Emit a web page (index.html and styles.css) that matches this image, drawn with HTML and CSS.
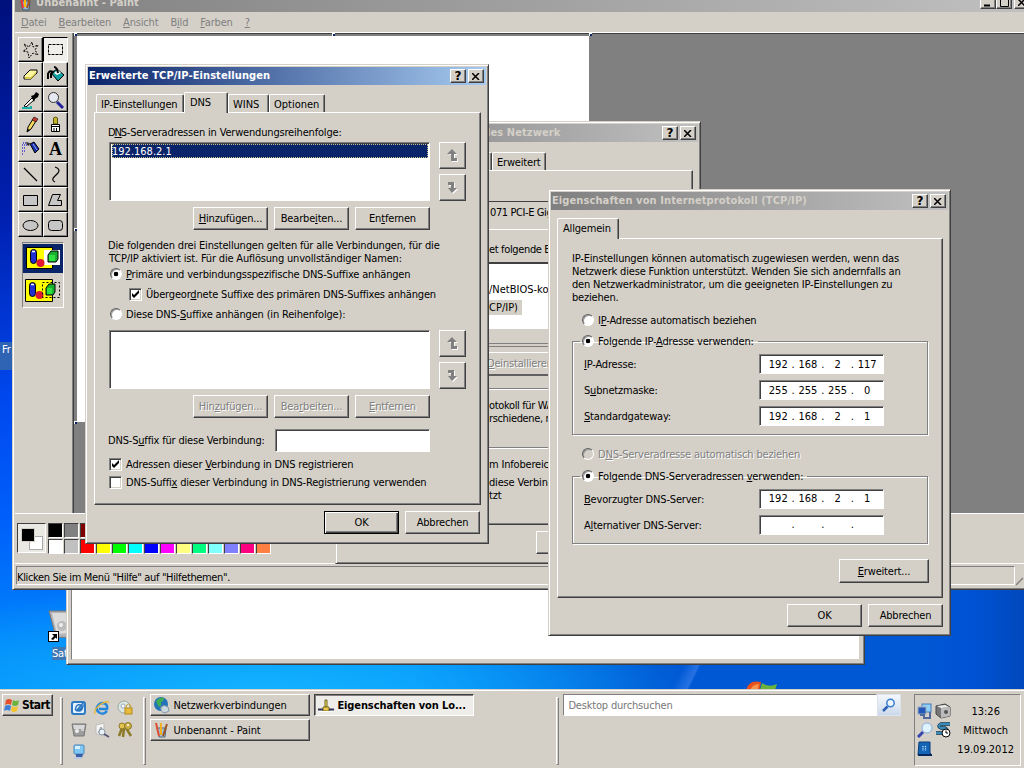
FILE: index.html
```html
<!DOCTYPE html>
<html lang="de">
<head>
<meta charset="utf-8">
<title>Desktop</title>
<link rel="stylesheet" href="styles.css">
</head>
<body>
<main class="desktop">
  <div class="desk-label desk-label-left">Fr</div>
  <div class="desk-icon">
    <svg width="36" height="32" viewBox="0 0 36 32"><path d="M1 1h30l-3 27-20-1z" fill="#b4b4b4" stroke="#777"/><path d="M4 3h20v20l-15 1z" fill="#dcdcdc"/><circle cx="14" cy="16" r="5" fill="#bbb"/><circle cx="13" cy="15" r="2" fill="#eee"/><rect x=".5" y="21.500" width="10" height="10" fill="#fff" stroke="#000"/><path d="M4 24h5v5l-1.500-1.500L5 30l-2-1 3-3z" fill="#000"/></svg>
  </div>
  <div class="desk-label desk-label-sat">Sat</div>
  <svg class="desk-logo" width="34" height="14" viewBox="0 0 34 14"><path d="M1 12Q3 0 16 3L14 14H0z" fill="#e8501c"/><path d="M5 12q2-7 9-7l-2 8z" fill="#f8964c"/><path d="M17 4q7 5 15 1l-3 9H14z" fill="#6db33b"/></svg>

  <section class="window explorer"><div class="explorer-body"></div></section>

  <section class="window paint">
    <header class="titlebar inactive">
      <svg width="16" height="16" viewBox="0 0 16 16"><path d="M3 6h9l-1 9H5z" fill="#8fb9d3" stroke="#456"/><path d="M5 13L3 2" stroke="#e33" stroke-width="2"/><path d="M7 12V2" stroke="#fb0" stroke-width="2"/><path d="M9 13l3-10" stroke="#a52" stroke-width="2"/></svg>
      <h1>Unbenannt - Paint</h1>
      <div class="caption"><b class="cap"><svg width="9" height="9"><path d="M0 7.500h6" stroke="#000" stroke-width="2"/></svg></b><b class="cap"><svg width="9" height="9"><path d="M.5 1.500h8v7h-8z" fill="none" stroke="#000"/></svg></b><b class="cap gap"><svg width="8" height="7"><path d="M0 0l7 7M7 0L0 7" stroke="#000" stroke-width="1.500"/></svg></b></div>
    </header>
    <nav class="menu"><span><u>D</u>atei</span><span><u>B</u>earbeiten</span><span><u>A</u>nsicht</span><span>B<u>i</u>ld</span><span><u>F</u>arben</span><span><u>?</u></span></nav>
    <div class="paint-body">
      <aside class="toolbox">
        <div class="tools">
          <i><svg viewBox="0 0 20 20"><path d="M3 4l5 3 3-5 1 5 5-2-3 5 3 5-5-2-4 5-1-6-5-1 4-2z" fill="none" stroke="#000" stroke-dasharray="2 1.200"/></svg></i>
          <i class="on"><svg viewBox="0 0 20 20"><path d="M2.500 4.500h14v10h-14z" fill="none" stroke="#000" stroke-dasharray="3 1"/></svg></i>
          <i><svg viewBox="0 0 20 20"><path d="M3 11l6-6h7v3l-6 6H3z" fill="#fff7a0" stroke="#000"/><path d="M4 12h6l5-5v2l-5 5H4z" fill="#d6c94e"/></svg></i>
          <i><svg viewBox="0 0 20 20"><path d="M5 8l6-4 7 6-6 6z" fill="#12a0a0" stroke="#000"/><path d="M8 8l4-3 3 3-4 2z" fill="#fff"/><path d="M8 2q3 0 4 6M2 14V9q1-4 5-2l-2 2v4" fill="none" stroke="#000" stroke-width="2"/></svg></i>
          <i><svg viewBox="0 0 20 20"><path d="M3 16l8-8 2 2-8 7z" fill="#fff" stroke="#000"/><path d="M10 6l3-1 2-3 3 2-1 3-3 2-1 3z" fill="#000"/><path d="M1 18h9v-2" stroke="#1ab0a8" stroke-width="2" fill="none"/></svg></i>
          <i><svg viewBox="0 0 20 20"><path d="M11 12l6 6" stroke="#22229c" stroke-width="3"/><circle cx="7.500" cy="7.500" r="5" fill="#e6e9f2" stroke="#333"/></svg></i>
          <i><svg viewBox="0 0 20 20"><path d="M6 17l1-5 5-8 3 2-5 8z" fill="#f5d95c" stroke="#000"/><path d="M11 5l2-3 4 2-2 3z" fill="#c43a30" stroke="#000" stroke-width=".6"/><path d="M6 17l1-3 2 1z"/></svg></i>
          <i><svg viewBox="0 0 20 20"><path d="M9.500 2l2 1v6h-4V3z" fill="#c2b62a" stroke="#5b5510"/><path d="M5.500 9.500h8v7h-8z" fill="#fff" stroke="#000"/><path d="M6 11.500h7M8 13v4M10.500 13v4" stroke="#000"/></svg></i>
          <i><svg viewBox="0 0 20 20"><path d="M9 4l4-2 5 7-4 4z" fill="#1b2fa8" stroke="#000"/><path d="M12 4l4 6" stroke="#8fa8ff"/><path d="M5 2l4 1-1 3-2-1z" fill="#333"/><path d="M2 3h4M1 5h6M1 8h4M1 11h3M1 14h2" stroke="#3b3bd0" stroke-dasharray="1 1" stroke-width="1.500"/></svg></i>
          <i class="letter">A</i>
          <i><svg viewBox="0 0 20 20"><path d="M3 3l13 13" stroke="#000" stroke-width="1.200"/></svg></i>
          <i><svg viewBox="0 0 20 20"><path d="M9 2q6 2 3 6l-4 4q-3 3 1 5" fill="none" stroke="#000" stroke-width="1.200"/></svg></i>
          <i><svg viewBox="0 0 20 20"><path d="M2.500 5.500h14v10h-14z" fill="#c6c6c6" stroke="#000"/></svg></i>
          <i><svg viewBox="0 0 20 20"><path d="M6.500 4.500h8l-3 6h4v5h-13z" fill="#c6c6c6" stroke="#000"/></svg></i>
          <i><svg viewBox="0 0 20 20"><ellipse cx="9.500" cy="10.500" rx="7.500" ry="5" fill="#c6c6c6" stroke="#000"/></svg></i>
          <i><svg viewBox="0 0 20 20"><rect x="2.500" y="5.500" width="14" height="10" rx="3" fill="#c6c6c6" stroke="#000"/></svg></i>
        </div>
        <div class="options">
          <div class="opt on"><svg width="38" height="26" viewBox="0 0 38 26"><path d="M2.500 2.500h26v21h-26z" fill="#ff0" stroke="#000"/><rect x="20" y="5" width="16" height="15" fill="#fff"/><rect x="6.500" y="4.500" width="6" height="14" rx="3" fill="#2030d0" stroke="#000"/><path d="M8 6.500h3" stroke="#fff" stroke-width="1.500"/><circle cx="16.500" cy="18" r="4" fill="#e01830"/><path d="M24 10l3-4h7v8l-2 3h-8z" fill="#18b030" stroke="#000"/><path d="M25 10h6v6h-6z" fill="#30e040"/></svg></div>
          <div class="opt"><svg width="38" height="26" viewBox="0 0 38 26"><path d="M1.500 1.500h27v22h-27z" fill="#ff0" stroke="#000"/><rect x="5.500" y="4.500" width="6" height="14" rx="3" fill="#2030d0" stroke="#000"/><path d="M7 6.500h3" stroke="#fff" stroke-width="1.500"/><circle cx="15.500" cy="17" r="4" fill="#e01830"/><path d="M22 10l3-4h6v8l-2 3h-7z" fill="#18b030" stroke="#000"/><path d="M23 10h5v6h-5z" fill="#30e040"/><path d="M18.500 4.500h17v15h-17z" fill="none" stroke="#000" stroke-dasharray="2 2"/></svg></div>
        </div>
      </aside>
      <div class="viewport"><div class="sheet"><b class="h h1"></b><b class="h h2"></b><b class="h h3"></b><b class="h h4"></b><b class="h h5"></b></div></div>
    </div>
    <div class="colors">
      <div class="current"><svg width="28" height="29"><rect x="11.500" y="12.500" width="13" height="13" fill="#fff" stroke="#aaa"/><rect x="3" y="4" width="14" height="14" fill="#d4d0c8"/><rect x="4" y="5" width="12" height="12" fill="#000"/></svg></div>
      <div class="swatches">
        <i style="background:#000"></i><i style="background:#808080"></i><i style="background:#800000"></i><i style="background:#808000"></i><i style="background:#008000"></i><i style="background:#008080"></i><i style="background:#000080"></i><i style="background:#800080"></i><i style="background:#808040"></i><i style="background:#004040"></i><i style="background:#0080ff"></i><i style="background:#004080"></i><i style="background:#4000ff"></i><i style="background:#804000"></i>
        <i style="background:#fff"></i><i style="background:#c0c0c0"></i><i style="background:#f00"></i><i style="background:#ff0"></i><i style="background:#0f0"></i><i style="background:#0ff"></i><i style="background:#00f"></i><i style="background:#f0f"></i><i style="background:#ffff80"></i><i style="background:#00ff80"></i><i style="background:#80ffff"></i><i style="background:#8080ff"></i><i style="background:#ff0080"></i><i style="background:#ff8040"></i>
      </div>
    </div>
    <footer class="status"><div class="status-text">Klicken Sie im Menü "Hilfe" auf "Hilfethemen".</div><div class="status-pane"></div><svg width="12" height="16" class="grip"><path d="M11 8L4 15" stroke="#808080" stroke-width="1.500"/></svg></footer>
  </section>

  <section class="window network">
    <header class="titlebar inactive"><h2>les Netzwerk</h2><div class="caption"><b class="cap">?</b><b class="cap gap"><svg width="8" height="7"><path d="M0 0l7 7M7 0L0 7" stroke="#000" stroke-width="1.500"/></svg></b></div></header>
    <div class="tabs"><span class="tab tab-cut"></span><span class="tab tab-erw">Erweitert</span></div>
    <div class="panel">
      <div class="n-adapter">071 PCI-E Gig</div>
      <div class="n-line">et folgende E</div>
      <div class="n-list"><span>/NetBIOS-ko</span><span class="sel">CP/IP)</span></div>
      <div class="n-tray"></div>
      <div class="n-btn"><u>D</u>einstallieren</div>
      <div class="n-desc">otokoll für WA<br>rschiedene, m</div>
      <div class="n-info">m Infobereich</div>
      <div class="n-info2">diese Verbindu<br>tzt</div>
    </div>
    <div class="n-foot"><span class="btn"></span></div>
  </section>

  <section class="window advanced">
    <header class="titlebar"><h2>Erweiterte TCP/IP-Einstellungen</h2><div class="caption"><b class="cap">?</b><b class="cap gap"><svg width="8" height="7"><path d="M0 0l7 7M7 0L0 7" stroke="#000" stroke-width="1.500"/></svg></b></div></header>
    <div class="tabs"><span class="tab t1">IP-Einstellungen</span><span class="tab active t2">DNS</span><span class="tab t3">WINS</span><span class="tab t4">Optionen</span></div>
    <div class="panel">
      <p class="row label">D<u>N</u>S-Serveradressen in Verwendungsreihenfolge:</p>
      <div class="listrow">
        <div class="listbox"><div class="item">192.168.2.1</div></div>
        <div class="arrows"><span class="btn"><svg width="12" height="14" viewBox="0 0 12 14"><path d="M6 1l5 5H8v4h3v3H5V6H2z" fill="#fff"/><path d="M5 0l5 5H7v4h3v3H4V5H0z" fill="#808080"/></svg></span><span class="btn"><svg width="12" height="14" viewBox="0 0 12 14"><path d="M2 2h6v6h3l-5 5-4-5h3V5H2z" fill="#fff"/><path d="M1 1h6v6h3l-5 5-4-5h3V4H1z" fill="#808080"/></svg></span></div>
      </div>
      <div class="btnrow"><span class="btn"><u>H</u>inzufügen...</span><span class="btn">Bearbe<u>i</u>ten...</span><span class="btn">En<u>t</u>fernen</span></div>
      <p class="para">Die folgenden drei Einstellungen gelten für alle Verbindungen, für die<br>TCP/IP aktiviert ist. Für die Auflösung unvollständiger Namen:</p>
      <div class="row"><i class="radio on"></i><span><u>P</u>rimäre und verbindungsspezifische DNS-Suffixe anhängen</span></div>
      <div class="row indent"><i class="check"><svg width="7" height="7" viewBox="0 0 7 7"><path d="M0 2v3l2 2 5-5V-1L2 4z"/></svg></i><span>Übergeor<u>d</u>nete Suffixe des primären DNS-Suffixes anhängen</span></div>
      <div class="row"><i class="radio"></i><span>Diese DNS-<u>S</u>uffixe anhängen (in Reihenfolge):</span></div>
      <div class="listrow second">
        <div class="listbox"></div>
        <div class="arrows"><span class="btn"><svg width="12" height="14" viewBox="0 0 12 14"><path d="M6 1l5 5H8v4h3v3H5V6H2z" fill="#fff"/><path d="M5 0l5 5H7v4h3v3H4V5H0z" fill="#808080"/></svg></span><span class="btn"><svg width="12" height="14" viewBox="0 0 12 14"><path d="M2 2h6v6h3l-5 5-4-5h3V5H2z" fill="#fff"/><path d="M1 1h6v6h3l-5 5-4-5h3V4H1z" fill="#808080"/></svg></span></div>
      </div>
      <div class="btnrow disabled"><span class="btn">Hin<u>z</u>ufügen...</span><span class="btn">Bea<u>r</u>beiten...</span><span class="btn"><u>E</u>ntfernen</span></div>
      <div class="suffix"><span>DNS-S<u>u</u>ffix für diese Verbindung:</span><div class="field"></div></div>
      <div class="row low"><i class="check"><svg width="7" height="7" viewBox="0 0 7 7"><path d="M0 2v3l2 2 5-5V-1L2 4z"/></svg></i><span>Adressen dieser <u>V</u>erbindung in DNS registrieren</span></div>
      <div class="row low"><i class="check"></i><span>DNS-Suffi<u>x</u> dieser Verbindung in DNS-Registrierung verwenden</span></div>
    </div>
    <footer class="foot"><span class="btn default">OK</span><span class="btn">Abbrechen</span></footer>
  </section>

  <section class="window protocol">
    <header class="titlebar inactive"><h2>Eigenschaften von Internetprotokoll (TCP/IP)</h2><div class="caption"><b class="cap">?</b><b class="cap gap"><svg width="8" height="7"><path d="M0 0l7 7M7 0L0 7" stroke="#000" stroke-width="1.500"/></svg></b></div></header>
    <div class="tabs"><span class="tab active t5">Allgemein</span></div>
    <div class="panel">
      <p class="para">IP-Einstellungen können automatisch zugewiesen werden, wenn das<br>Netzwerk diese Funktion unterstützt. Wenden Sie sich andernfalls an<br>den Netzwerkadministrator, um die geeigneten IP-Einstellungen zu<br>beziehen.</p>
      <div class="row auto"><i class="radio"></i><span>I<u>P</u>-Adresse automatisch beziehen</span></div>
      <fieldset>
        <legend><i class="radio on"></i><span>Folgende IP-<u>A</u>dresse verwenden:</span></legend>
        <div class="iprow"><span><u>I</u>P-Adresse:</span><div class="ip"><b>192</b>.<b>168</b>.<b>2</b>.<b>117</b></div></div>
        <div class="iprow"><span>S<u>u</u>bnetzmaske:</span><div class="ip"><b>255</b>.<b>255</b>.<b>255</b>.<b>0</b></div></div>
        <div class="iprow"><span><u>S</u>tandardgateway:</span><div class="ip"><b>192</b>.<b>168</b>.<b>2</b>.<b>1</b></div></div>
      </fieldset>
      <div class="row auto dns disabled"><i class="radio off"></i><span>D<u>N</u>S-Serveradresse automatisch beziehen</span></div>
      <fieldset>
        <legend><i class="radio on"></i><span>Folgende DNS-Serveradressen <u>v</u>erwenden:</span></legend>
        <div class="iprow"><span><u>B</u>evorzugter DNS-Server:</span><div class="ip"><b>192</b>.<b>168</b>.<b>2</b>.<b>1</b></div></div>
        <div class="iprow"><span>A<u>l</u>ternativer DNS-Server:</span><div class="ip"><b></b>.<b></b>.<b></b>.<b></b></div></div>
      </fieldset>
      <div class="more"><span class="btn"><u>E</u>rweitert...</span></div>
    </div>
    <footer class="foot"><span class="btn">OK</span><span class="btn">Abbrechen</span></footer>
  </section>

  <footer class="taskbar">
    <div class="start"><svg width="16" height="16" viewBox="0 0 16 16"><path d="M2 3q3-2 6 0L7 8Q4 6 1 8z" fill="#e5502a"/><path d="M9 3q3 2 6 0l-1 5q-3 2-6 0z" fill="#6cb33e"/><path d="M1 9q3-2 6 0l-1 5q-3-2-6 0z" fill="#3f7fd6"/><path d="M8 9q3 2 6 0l-1 5q-3 2-6 0z" fill="#f4c430"/></svg><b>Start</b></div>
    <div class="sep s1"></div>
    <div class="quick">
      <svg viewBox="0 0 16 16"><rect x="1" y="2" width="13" height="12" rx="2" fill="#e7f2ff" stroke="#2c7ac4" stroke-width="2"/><path d="M11 6q-4-3-6 1t3 4q3 0 4-5L8 10H6L13 2" fill="none" stroke="#2a76c0" stroke-width="1.500"/></svg>
      <svg viewBox="0 0 16 16"><path d="M13 11q-3 4-7 2-4-2-3-6 2-4 6-4 5 1 4 6H5" fill="none" stroke="#2687da" stroke-width="2.500"/><path d="M1 14Q-1 10 7 4q7-4 8-1" fill="none" stroke="#e8b730" stroke-width="1.300"/></svg>
      <svg viewBox="0 0 16 16"><circle cx="7" cy="7" r="6" fill="#dce6e2" stroke="#9aaba5"/><circle cx="6" cy="6" r="2" fill="#fff" stroke="#9ab"/><rect x="8" y="8" width="7" height="6" fill="#e7bb3c" stroke="#b58b1c"/><path d="M9 8q0-4 2.500-4T14 8" fill="none" stroke="#c99d2c"/></svg>
      <svg viewBox="0 0 16 16"><path d="M1 2h14l-2 12H3z" fill="#9d9d9d" stroke="#777"/><path d="M2 3h12l-1 4H3z" fill="#d8d8d8"/><circle cx="6" cy="9" r="2" fill="#eee"/><path d="M10 8h3" stroke="#fff"/></svg>
      <svg viewBox="0 0 16 16"><path d="M2 3l8-2v12l-8-1z" fill="#f4f4f4" stroke="#bbb"/><path d="M4 11l3-6 2 6" fill="none" stroke="#999"/><circle cx="8" cy="10" r="3" fill="#eaf2f8" stroke="#89a"/><path d="M10 12l5 3" stroke="#557" stroke-width="2"/></svg>
      <svg viewBox="0 0 16 16"><path d="M5 6L2 14M7 6l-1 9M9 6l5 8" stroke="#8d7a28" stroke-width="2.500"/><circle cx="5" cy="4" r="3" fill="#e3c24d" stroke="#8d7a28"/><circle cx="11" cy="4" r="3.500" fill="#cbb04a" stroke="#8d7a28"/><circle cx="11" cy="3" r="1" fill="#fff"/></svg>
      <svg viewBox="0 0 16 16"><rect x="3" y="1" width="10" height="9" rx="1" fill="#7fc8f4" stroke="#4a86c0"/><path d="M4 2h5v3H4z" fill="#d5f0ff"/><path d="M5 10h7l-1 4H5z" fill="#3a5da8"/><path d="M3 13h8v2H3z" fill="#b9c8e2"/></svg>
    </div>
    <div class="sep s2"></div>
    <div class="tasks">
      <div class="task"><svg width="18" height="18" viewBox="0 0 18 18"><circle cx="8" cy="8" r="7" fill="#2273b8"/><path d="M3 5q4-5 8-3 0 3-3 4 1 4-2 5-2-3-3-6z" fill="#3fae52"/><path d="M8 11q3-3 7 0l1 4-4 2q-5-1-4-6z" fill="#cbd6df" stroke="#8497a6"/></svg><span>Netzwerkverbindungen</span></div>
      <div class="task pressed"><svg width="18" height="18" viewBox="0 0 18 18"><path d="M8 4h2v7H8z" fill="#f5e67a" stroke="#6d621a"/><path d="M6 11h6v4H6z" fill="#e9c84c" stroke="#7d6a1c"/><path d="M1 13.500h5M12 13.500h5" stroke="#335" stroke-width="2"/><path d="M2 15.500h14" stroke="#fff"/></svg><b>Eigenschaften von Lo...</b></div>
      <div class="task"><svg width="18" height="18" viewBox="0 0 18 18"><path d="M4 7h9l-1 9H6z" fill="#9dc0d8" stroke="#567"/><path d="M6 15L3 2" stroke="#e05030" stroke-width="2"/><path d="M8 14V2" stroke="#f0b020" stroke-width="2"/><path d="M10 15l4-12" stroke="#9a5426" stroke-width="2"/></svg><span>Unbenannt - Paint</span></div>
    </div>
    <div class="sep s3"></div>
    <div class="search"><div class="search-text">Desktop durchsuchen</div><div class="search-btn"><svg width="14" height="14" viewBox="0 0 14 14"><path d="M5.500 8.500L1 13" stroke="#2b5fb4" stroke-width="2.500"/><circle cx="8.500" cy="5" r="3.700" fill="#eaf6ff" stroke="#3b7fd0" stroke-width="1.500"/></svg></div></div>
    <div class="tray">
      <div class="tray-icons">
        <svg viewBox="0 0 16 16"><rect x="5" y="1" width="9" height="8" fill="#8fd0f7" stroke="#4c79b8"/><rect x="1" y="4" width="8" height="7" fill="#2456b8" stroke="#9ab"/><path d="M3 12h4v3h6V9" fill="none" stroke="#53699c" stroke-width="2"/></svg>
        <svg viewBox="0 0 16 16"><path d="M1 3l9-2 5 3v9l-9 2-5-4z" fill="#777" stroke="#444"/><path d="M6 5l9-1v9l-9 2z" fill="#bbb"/><path d="M2 3l8-1 4 2-8 1z" fill="#eee"/><circle cx="11" cy="9" r="2" fill="#555"/></svg>
        <svg viewBox="0 0 16 16"><path d="M6 10l-5 5" stroke="#3444a8" stroke-width="3"/><circle cx="10" cy="6" r="5" fill="#dff3ff" stroke="#8aaede"/></svg>
        <svg viewBox="0 0 16 16"><path d="M15 2H6Q2 4 6 6h4q3 2 0 5H1" fill="none" stroke="#0d3350" stroke-width="3.600"/><path d="M15 2H6Q2 4 6 6h4q3 2 0 5H1" fill="none" stroke="#3a8cb8" stroke-width="2"/><circle cx="11" cy="11" r="4" fill="#fff" stroke="#000"/><path d="M11 8.500V11h2" fill="none" stroke="#000"/></svg>
        <svg viewBox="0 0 16 16"><path d="M2 1h11v11l2 2H1z" fill="#1465b8" stroke="#0c3c78"/><path d="M6 5v5M8.500 5v5" stroke="#bfe2ff" stroke-width="1.300" stroke-dasharray="1.200 1"/><path d="M1 14h14" stroke="#062a5c" stroke-width="2"/></svg>
      </div>
      <div class="clock"><span>13:26</span><span>Mittwoch</span><span>19.09.2012</span></div>
    </div>
  </footer>
</main>
</body>
</html>
```
FILE: styles.css
```css
* { box-sizing: border-box; }
body { margin: 0; font: 11px/13px "DejaVu Sans Condensed", "DejaVu Sans", sans-serif; font-stretch: condensed; letter-spacing: -0.18px; color: #000; overflow: hidden; }
p, h1, h2 { margin: 0; font-size: 11px; }
i { font-style: normal; }
u { text-decoration: underline; text-underline-offset: 1px; text-decoration-thickness: 1px; text-decoration-skip-ink: none; }
svg { display: block; flex: none; }

.desktop { position: relative; width: 1024px; height: 768px; overflow: hidden; white-space: nowrap;
  background:
    linear-gradient(116deg, transparent 47%, rgba(110,160,255,.35) 52%, transparent 53%) 560px 640px / 260px 60px no-repeat,
    linear-gradient(90deg, transparent 90%, #0052d4 95%, #0048bc),
    radial-gradient(ellipse 440px 120px at 260px 700px, #14b4ff, rgba(0,140,255,0)),
    linear-gradient(90deg, rgba(0,80,210,0) 40%, #0058d4 64%),
    linear-gradient(180deg, #00107c 0, #0020b0 28%, #0048ee 52%, #0060fa 68%, #0088fb 85%, #0098f8 100%); }
.desk-label { position: absolute; color: #fff; }
.desk-label-left { left: 0; top: 342px; width: 20px; height: 28px; background: #2f63b4; padding-left: 2px; line-height: 15px; }
.desk-label-sat { left: 52px; top: 647px; width: 30px; background: #3f78b4; }
.desk-icon { position: absolute; left: 48px; top: 610px; }
.desk-logo { position: absolute; left: 745px; top: 679px; }

.window { position: absolute; background: #d4d0c8; border: 1px solid; border-color: #d4d0c8 #404040 #404040 #d4d0c8; box-shadow: inset 1px 1px #fff, inset -1px -1px #808080; padding: 2px; display: flex; flex-direction: column; }
.titlebar { display: flex; height: 18px; flex: none; align-items: center; background: linear-gradient(90deg, #0a246a, #a6caf0); color: #fff; padding: 0 2px 0 1px; }
.titlebar.inactive { background: linear-gradient(90deg, #808080, #c0c0c0); color: #d4d0c8; }
.titlebar h1, .titlebar h2 { font-weight: bold; flex: 1; letter-spacing: 0.1px; margin-top: -1px; }
.caption { display: flex; color: #000; letter-spacing: 0; }
.cap { width: 16px; height: 14px; background: #d4d0c8; display: flex; align-items: center; justify-content: center; font: bold 12px/12px "DejaVu Sans", sans-serif; border: 1px solid; border-color: #fff #404040 #404040 #fff; box-shadow: inset -1px -1px #808080; }
.cap.gap { margin-left: 2px; }

.btn { display: flex; align-items: center; justify-content: center; width: 75px; height: 23px; border: 1px solid; border-color: #fff #404040 #404040 #fff; box-shadow: inset -1px -1px #808080; background: #d4d0c8; }
.btn > u { white-space: pre; }
.btn.default { border-color: #000; box-shadow: inset 1px 1px #fff, inset -1px -1px #404040, inset -2px -2px #808080; }
.disabled { color: #808080; text-shadow: 1px 1px #fff; }

.explorer { left: 66px; top: 500px; width: 799px; height: 165px; }
.explorer-body { flex: 1; margin: 2px; background: #fff; border: 1px solid #808080; border-right-color: #d4d0c8; border-bottom-color: #d4d0c8; }

.paint { left: 12px; top: -10px; width: 1025px; height: 600px; padding: 2px 2px 2px 2px; }
.paint > .titlebar { padding: 0 4px 0 3px; gap: 2px; height: 19px; }
.paint > .titlebar .caption { margin-top: -1px; }
.menu { height: 20px; display: flex; gap: 12px; padding: 4px 6px 0; color: #808080; }
.paint-body { height: 482px; display: flex; border-top: 1px solid #fff; border-bottom: 1px solid #fff; }
.toolbox { width: 57px; padding: 4px 0 0 3px; }
.tools { display: grid; grid-template-columns: 25px 25px; grid-auto-rows: 25px; }
.tools i { border: 1px solid; border-color: #fff #000 #000 #fff; box-shadow: inset -1px -1px #808080; padding: 2px; }
.tools i svg { width: 20px; height: 20px; }
.tools i.on { border-color: #000 #fff #fff #000; background: #f1efeb; box-shadow: none; }
.tools .letter { font: bold 18px/19px "Liberation Serif", serif; text-align: center; }
.options { margin: 5px 0 0 4px; width: 42px; height: 66px; border: 1px solid; border-color: #808080 #fff #fff #808080; padding: 1px 0; }
.opt { height: 29px; padding: 1px; margin-bottom: 4px; }
.opt.on { background: #0a246a; }
.viewport { flex: 1; background: #808080; border-left: 1px solid #808080; box-shadow: inset 1px 1px #404040; padding: 3px 0 0 4px; }
.sheet { position: relative; width: 512px; height: 386px; background: #fff; }
.h { position: absolute; width: 3px; height: 3px; background: #0a246a; border: 1px solid #fff; border-right: 0; border-bottom: 0; }
.h1 { left: -3px; top: -3px; } .h2 { left: 255px; top: -3px; } .h3 { left: 512px; top: -3px; } .h4 { left: -3px; top: 192px; } .h5 { left: -3px; top: 385px; }
.colors { height: 50px; display: flex; padding: 9px 0 0 2px; border-bottom: 1px solid #fff; }
.current { width: 29px; height: 30px; border: 1px solid; border-color: #404040 #fff #fff #404040; background: #ebe9e4; }
.current svg { width: 27px; height: 28px; }
.swatches { display: grid; grid-template-columns: repeat(14, 15px); grid-auto-rows: 15px; gap: 1px; margin-left: 2px; }
.swatches i { border: 1px solid; border-color: #404040 #fff #fff #404040; }
.status { flex: 1; display: flex; gap: 3px; padding: 2px 0 2px 1px; position: relative; }
.status > div { border: 1px solid; border-color: #808080 #fff #fff #808080; }
.status-text { width: 830px; padding: 4px 0 0 0; letter-spacing: -0.35px; }
.status-pane { width: 166px; }
.grip { position: absolute; left: 997px; top: 6px; }

.tabs { display: flex; align-items: flex-end; flex: none; height: 29px; }
.tab { height: 18px; padding: 3px 0 0 4px; border: 1px solid; border-color: #fff #404040 transparent #fff; border-bottom: 0; border-radius: 2px 2px 0 0; box-shadow: inset -1px 0 #808080; flex: none; }
.tab.active { position: relative; height: 21px; background: #d4d0c8; margin-bottom: -1px; padding-left: 5px; }
.panel { border: 1px solid; border-color: #fff #404040 #404040 #fff; box-shadow: inset -1px -1px #808080; flex: none; display: flex; flex-direction: column; }
.row { display: flex; align-items: center; height: 20px; flex: none; }
.radio { width: 12px; height: 12px; border-radius: 50%; background: #fff; border: 1px solid; border-color: #606060 #fff #fff #606060; box-shadow: inset 1px 1px #999; margin: 0 4px 0 1px; flex: none; }
.radio.on { background: radial-gradient(circle at 50% 50%, #000 2px, #fff 2.600px); }
.radio.off { background: #d4d0c8; }
.check { width: 13px; height: 13px; flex: none; background: #fff; border: 1px solid; border-color: #808080 #fff #fff #808080; box-shadow: inset 1px 1px #404040, inset -1px -1px #d4d0c8; margin-right: 4px; padding: 2px; }
.check svg { overflow: visible; }

.advanced { left: 85px; top: 64px; width: 404px; height: 480px; }
.advanced .tabs { padding-left: 8px; height: 27px; }
.t1 { width: 88px; } .t2 { width: 44px; } .t3 { width: 41px; } .t4 { width: 56px; }
.t3, .t4 { letter-spacing: 0; }
.advanced .panel { margin: 0 5px 0 6px; height: 393px; padding: 9px 0 0 14px; }
.advanced .label, .advanced .para, .suffix > span { text-indent: -1px; }
.advanced .para { padding-left: 1px; margin-left: -1px; }
.listrow { display: flex; height: 59px; gap: 9px; flex: none; }
.listbox { width: 321px; background: #fff; border: 1px solid; border-color: #808080 #fff #fff #808080; box-shadow: inset 1px 1px #404040; padding: 1px; }
.item { height: 14px; margin-left: 1px; background: #0a246a; outline: 1px dotted #c9c08f; outline-offset: -1px; color: #fff; padding: 1px 0 0 0; letter-spacing: 0; }
.arrows { display: flex; flex-direction: column; justify-content: space-between; }
.arrows .btn { width: 27px; height: 27px; }
.btnrow { display: flex; gap: 6px; margin: 6px 0 0 84px; height: 23px; flex: none; }
.advanced .para { margin-top: 9px; height: 25px; }
.indent { padding-left: 20px; }
.second { margin-top: 6px; }
.suffix { display: flex; height: 23px; margin-top: 11px; align-items: center; justify-content: space-between; width: 321px; }
.field { width: 155px; height: 23px; background: #fff; border: 1px solid; border-color: #808080 #fff #fff #808080; box-shadow: inset 1px 1px #404040; }
.row.low { height: 18px; }
.suffix + .low { margin-top: 3px; }
.foot { display: flex; justify-content: flex-end; gap: 6px; padding: 6px 6px 0 0; }

.protocol { left: 548px; top: 189px; width: 403px; height: 447px; }
.protocol .tabs { padding-left: 6px; height: 28px; }
.t5 { width: 62px; padding-top: 3px; }
.protocol .panel { margin: 0 5px 0 6px; height: 360px; padding: 13px 13px 0 14px; }
.protocol .para { height: 52px; }
.auto { margin: 6px 0 0 9px; }
.auto.dns { margin-top: 9px; }
fieldset { margin: 0; border: 1px solid #808080; box-shadow: 1px 1px #fff, inset 1px 1px #fff; padding: 0 0 5px 11px; min-width: 0; width: 356px; }
legend { display: flex; align-items: center; height: 20px; padding: 0 4px 0 1px; margin-left: -4px; }
.auto + fieldset { margin-top: 1px; }
.dns + fieldset { margin-top: 2px; }
.iprow { display: flex; align-items: center; height: 26px; }
.iprow > span { width: 175px; }
.ip { width: 125px; height: 20px; background: #fff; border: 1px solid; border-color: #808080 #fff #fff #808080; box-shadow: inset 1px 1px #404040; display: flex; padding: 3px 0 0 5px; letter-spacing: 0; }
.dns + fieldset .ip { padding-top: 2px; }
.ip b { font-weight: normal; width: 26.500px; text-align: center; }
.more { display: flex; justify-content: flex-end; margin-top: 15px; }
.more .btn { width: 90px; height: 24px; }
.protocol .foot { padding-right: 5px; }

.network { left: 335px; top: 121px; width: 366px; height: 443px; }
.network .titlebar { padding-left: 149px; }
.network .tabs { padding-left: 6px; height: 28px; }
.tab-cut { width: 148px; }
.tab-erw { width: 54px; margin-left: 0; }
.network .panel { margin: 0 5px 0 6px; height: 355px; overflow: hidden; padding-top: 30px; }
.network .panel > div { padding-left: 144px; flex: none; }
.n-adapter { height: 29px; margin-right: 20px; border: 1px solid; border-color: #404040 #fff #fff; padding-top: 4px; letter-spacing: -0.4px; }
.network .panel > .n-line { height: 32px; padding-top: 13px; letter-spacing: -0.35px; }
.n-list { height: 67px; background: #fff; border-top: 2px solid #404040; padding-top: 19px; display: flex; flex-direction: column; align-items: flex-start; gap: 2px; }
.n-list span { height: 15px; letter-spacing: 0; }
.n-list .sel { background: #d4d0c8; padding: 1px 4px 0 0; }
.n-tray { height: 18px; border-bottom: 4px double #808080; }
.n-btn { margin-top: 5px; border-top: 1px solid #fff; border-bottom: 2px solid #606060; height: 24px; color: #808080; text-shadow: 1px 1px #fff; padding-top: 4px; }
.network .panel > .n-btn { padding-left: 142px; }
.n-desc { margin-top: 12px; height: 60px; border-top: 1px solid #808080; border-bottom: 1px solid #808080; box-shadow: inset 0 1px #fff, 0 1px #fff; padding-top: 10px; letter-spacing: -0.35px; }
.n-info { margin-top: 10px; height: 18px; }
.n-foot { padding: 6px 0 0 198px; }

.taskbar { position: absolute; left: 0; top: 689px; width: 1024px; height: 79px; background: #d4d0c8; border-top: 1px solid #d4d0c8; box-shadow: inset 0 1px #fff; display: flex; padding: 4px 3px 0 2px; }
.start { width: 52px; height: 22px; border: 1px solid; border-color: #fff #404040 #404040 #fff; box-shadow: inset -1px -1px #808080; display: flex; align-items: center; gap: 2px; padding-left: 1px; font-size: 12px; letter-spacing: -0.6px; }
.sep { width: 3px; height: 68px; border: 1px solid; border-color: #fff #808080 #808080 #fff; flex: none; margin-top: 3px; }
.s1 { margin-left: 7px; }
.quick { display: grid; grid-template-columns: repeat(3, 23px); grid-auto-rows: 22px; margin: 6px 0 0 8px; width: 73px; align-content: start; }
.quick svg { width: 16px; height: 16px; }
.tasks { display: grid; grid-template-columns: 160px 160px; grid-auto-rows: 22px; gap: 3px 4px; margin-left: 4px; align-content: start; }
.task { border: 1px solid; border-color: #fff #404040 #404040 #fff; box-shadow: inset -1px -1px #808080; display: flex; align-items: center; gap: 2px; padding-left: 2px; letter-spacing: -0.1px; }
.task.pressed { border-color: #404040 #fff #fff #404040; box-shadow: inset 1px 1px #808080; background: #efedea; letter-spacing: -0.1px; }
.s3 { margin-left: 82px; }
.search { display: flex; height: 22px; margin-left: 4px; }
.search-text { width: 314px; background: #fff; border: 1px solid; border-color: #808080 #fff #fff #808080; color: #777; padding: 4px 0 0 4px; }
.search-btn { width: 24px; background: linear-gradient(#f5f8fc, #ccd9eb); display: flex; align-items: center; justify-content: center; border: 1px solid #dde3ec; }
.tray { margin-left: 13px; width: 108px; height: 72px; border: 1px solid; border-color: #808080 #fff #fff #808080; display: flex; padding: 8px 0 0 2px; }
.tray-icons { display: grid; grid-template-columns: 18px 18px; grid-auto-rows: 19px; width: 36px; align-content: start; }
.tray-icons svg { width: 16px; height: 16px; }
.clock { flex: 1; display: flex; flex-direction: column; align-items: center; line-height: 19px; padding-right: 2px; margin-top: -1px; letter-spacing: 0; }
```
